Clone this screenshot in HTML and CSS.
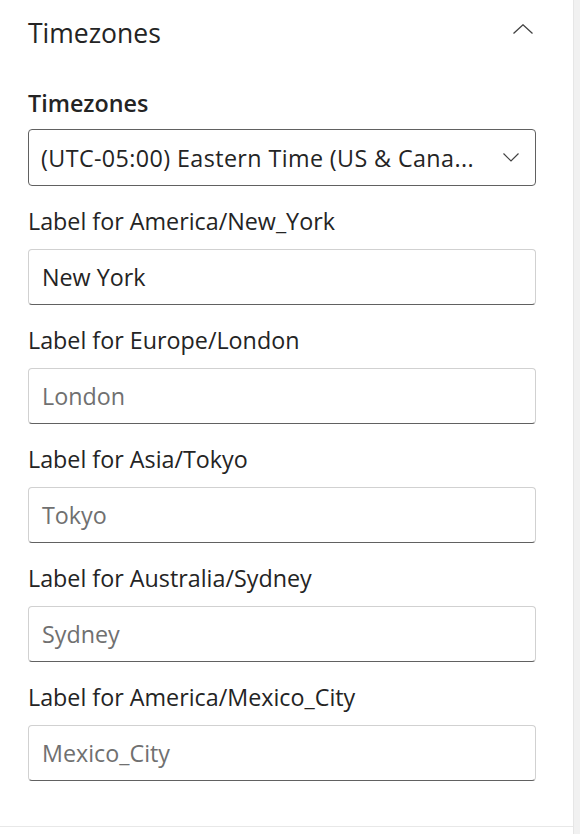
FILE: index.html
```html
<!DOCTYPE html>
<html lang="en">
<head>
<meta charset="utf-8">
<title>Timezones</title>
<link rel="stylesheet" href="styles.css">
</head>
<body>
<div class="shell">
  <div class="panel">
    <section class="section">
      <div class="section-header">
        <h2 class="section-title">Timezones</h2>
        <svg class="chev-up" width="20" height="10" viewBox="0 0 20 10" aria-hidden="true"><path d="M0.5 9.5 L10 0.8 L19.5 9.5" fill="none" stroke="#424242" stroke-width="1.3"/></svg>
      </div>
      <div class="fields">
        <div class="field field-select">
          <label class="label label-strong">Timezones</label>
          <div class="dropdown">
            <span class="dropdown-value">(UTC-05:00) Eastern Time (US &amp; Cana...</span>
            <svg class="chev-down" width="16" height="9" viewBox="0 0 16 9" aria-hidden="true"><path d="M0.5 0.5 L8 8 L15.5 0.5" fill="none" stroke="#424242" stroke-width="1.2"/></svg>
          </div>
        </div>
        <div class="field">
          <label class="label">Label for America/New_York</label>
          <div class="input"><span class="value">New York</span></div>
        </div>
        <div class="field">
          <label class="label">Label for Europe/London</label>
          <div class="input"><span class="placeholder">London</span></div>
        </div>
        <div class="field">
          <label class="label">Label for Asia/Tokyo</label>
          <div class="input"><span class="placeholder">Tokyo</span></div>
        </div>
        <div class="field">
          <label class="label">Label for Australia/Sydney</label>
          <div class="input"><span class="placeholder">Sydney</span></div>
        </div>
        <div class="field">
          <label class="label">Label for America/Mexico_City</label>
          <div class="input"><span class="placeholder">Mexico_City</span></div>
        </div>
      </div>
    </section>
  </div>
  <div class="scroll-strip"></div>
</div>
</body>
</html>
```

FILE: styles.css
```css
* { box-sizing: border-box; }
html, body { margin: 0; padding: 0; background: #ffffff; }
body {
  font-family: "Segoe UI", "Open Sans", sans-serif;
  color: #242424;
  width: 580px;
  height: 834px;
  overflow: hidden;
}
.shell {
  display: flex;
  height: 834px;
}
.panel {
  width: 573px;
  flex: none;
}
.scroll-strip {
  flex: 1;
  background: #f1f1f1;
  border-left: 1px solid #e6e6e6;
}
.section {
  padding: 0 37px 45px 28px;
  border-bottom: 1px solid #e8e8e8;
}
.section-header {
  height: 89px;
  display: flex;
  align-items: flex-start;
  justify-content: space-between;
  padding-top: 14px;
}
.section-title {
  margin: 0;
  font-size: 26.5px;
  font-weight: 400;
  line-height: 38px;
  color: #242424;
}
.chev-up { margin-right: 3px; margin-top: 10px; }
.fields {
  display: flex;
  flex-direction: column;
  gap: 21px;
}
.field {
  display: flex;
  flex-direction: column;
  gap: 13px;
}
.field-select { gap: 11px; }
.label {
  font-size: 23.3px;
  line-height: 29px;
  display: block;
}
.label-strong { font-weight: 600; }
.dropdown {
  height: 57px;
  border: 1px solid #616161;
  border-radius: 4px;
  display: flex;
  align-items: center;
  justify-content: space-between;
  padding: 0 16px 0 12px;
  font-size: 23.3px;
}
.dropdown-value { white-space: nowrap; letter-spacing: 0.4px; }
.input {
  height: 56px;
  border: 1px solid #d1d1d1;
  border-bottom-color: #616161;
  border-radius: 4px;
  display: flex;
  align-items: center;
  padding: 0 13px;
  font-size: 23.3px;
}
.value { color: #242424; }
.placeholder { color: #707070; }
```
